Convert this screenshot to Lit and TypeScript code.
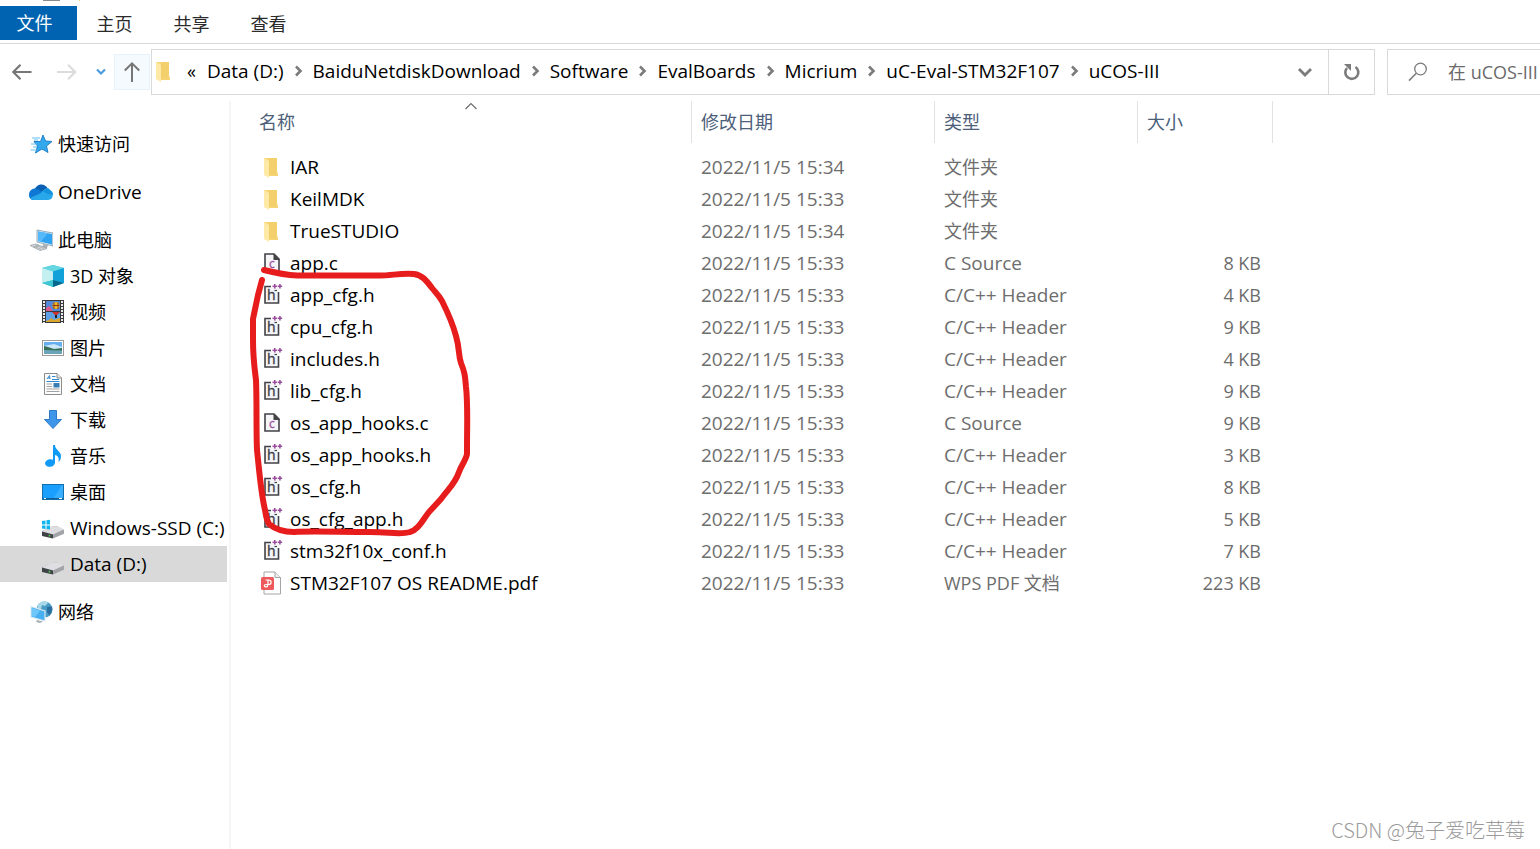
import { LitElement, html, css, svg, nothing, TemplateResult } from "lit";
import { customElement } from "lit/decorators.js";
import { classMap } from "lit/directives/class-map.js";

type FileKind = "folder" | "c" | "h" | "pdf";

interface FileRow {
  name: string;
  date: string;
  type: string;
  size: string;
  kind: FileKind;
}

interface NavItem {
  label: string;
  icon: string;
  child?: boolean;
  group?: boolean;
  selected?: boolean;
}

const HEADER = "C/C++ Header";

const FILES: FileRow[] = [
  { name: "IAR", date: "2022/11/5 15:34", type: "文件夹", size: "", kind: "folder" },
  { name: "KeilMDK", date: "2022/11/5 15:33", type: "文件夹", size: "", kind: "folder" },
  { name: "TrueSTUDIO", date: "2022/11/5 15:34", type: "文件夹", size: "", kind: "folder" },
  { name: "app.c", date: "2022/11/5 15:33", type: "C Source", size: "8 KB", kind: "c" },
  { name: "app_cfg.h", date: "2022/11/5 15:33", type: HEADER, size: "4 KB", kind: "h" },
  { name: "cpu_cfg.h", date: "2022/11/5 15:33", type: HEADER, size: "9 KB", kind: "h" },
  { name: "includes.h", date: "2022/11/5 15:33", type: HEADER, size: "4 KB", kind: "h" },
  { name: "lib_cfg.h", date: "2022/11/5 15:33", type: HEADER, size: "9 KB", kind: "h" },
  { name: "os_app_hooks.c", date: "2022/11/5 15:33", type: "C Source", size: "9 KB", kind: "c" },
  { name: "os_app_hooks.h", date: "2022/11/5 15:33", type: HEADER, size: "3 KB", kind: "h" },
  { name: "os_cfg.h", date: "2022/11/5 15:33", type: HEADER, size: "8 KB", kind: "h" },
  { name: "os_cfg_app.h", date: "2022/11/5 15:33", type: HEADER, size: "5 KB", kind: "h" },
  { name: "stm32f10x_conf.h", date: "2022/11/5 15:33", type: HEADER, size: "7 KB", kind: "h" },
  { name: "STM32F107 OS README.pdf", date: "2022/11/5 15:33", type: "WPS PDF 文档", size: "223 KB", kind: "pdf" },
];

const NAV: NavItem[] = [
  { label: "快速访问", icon: "star" },
  { label: "OneDrive", icon: "cloud", group: true },
  { label: "此电脑", icon: "pc", group: true },
  { label: "3D 对象", icon: "cube", child: true },
  { label: "视频", icon: "video", child: true },
  { label: "图片", icon: "picture", child: true },
  { label: "文档", icon: "doc", child: true },
  { label: "下载", icon: "download", child: true },
  { label: "音乐", icon: "music", child: true },
  { label: "桌面", icon: "desktop", child: true },
  { label: "Windows-SSD (C:)", icon: "diskc", child: true },
  { label: "Data (D:)", icon: "disk", child: true, selected: true },
  { label: "网络", icon: "network", group: true },
];

const CRUMBS = ["Data (D:)", "BaiduNetdiskDownload", "Software", "EvalBoards", "Micrium", "uC-Eval-STM32F107", "uCOS-III"];

const isLatin = (text: string) => /^[\x20-\x7e]+$/.test(text);

const folder = svg`
  <path d="M4 3H17V19H4Z" fill="#f7d778"/>
  <path d="M9 3H17V19H9Z" fill="#f3d06c"/>
  <path d="M16 14L18 19V21H9V19H16Z" fill="#f5d272"/>
  <path d="M4 3L9 6V23L4 20Z" fill="#ffe9a6"/>`;

const disk = svg`
  <path d="M1 15L12 10H16L23 14V18L12 22L1 19Z" fill="#c3c3c7"/>
  <path d="M1 15.500L11 10.500H17L23 13.500L12 18.500Z" fill="#dedee2"/>
  <path d="M1 15.500L12 18.500V22.500L1 20Z" fill="#3e4345"/>
  <path d="M12 18.500L23 13.500V17.500L12 22.500Z" fill="#a3a4a8"/>
  <path d="M8.500 18.800V20.500" stroke="#55d455" stroke-width="1.500"/>`;

const ICONS: Record<string, TemplateResult> = {
  folder,
  c: svg`
    <path d="M5 3H14L19 8V20H5Z" fill="#f5f4f7" stroke="#424247" stroke-width="1.600"/>
    <path d="M13.500 2.500L20 9H13.500Z" fill="#424247"/>
    <text x="11.800" y="16.500" text-anchor="middle" font-family="Open Sans, sans-serif" font-size="12" fill="#9b4f9e" stroke="#9b4f9e" stroke-width=".3">c</text>`,
  h: svg`
    <path d="M5 4H19V20H5Z" fill="#f5f4f7"/>
    <path d="M11 3.500H5V20H18.500V9" fill="none" stroke="#424247" stroke-width="1.600"/>
    <text x="11.300" y="17" text-anchor="middle" font-family="Open Sans, sans-serif" font-size="14" fill="#424247" stroke="#424247" stroke-width=".4">h</text>
    <path d="M14.500 7.500H17" fill="none" stroke="#424247" stroke-width="1.200"/>
    <path d="M12.500 3.300H17M14.750 1V5.600M17.700 3.300H22.200M19.950 1V5.600" stroke="#9b4f9e" stroke-width="1.600"/>`,
  pdf: svg`
    <path d="M4 1H15L20.500 6.500V23H4Z" fill="#fff" stroke="#a5a5a5"/>
    <path d="M15 1V6.500H20.500" fill="#eee" stroke="#a5a5a5"/>
    <rect x="1" y="6" width="13" height="13" rx="1.500" fill="#ee5a5c"/>
    <path d="M5.500 9H8.500C12 9 12 13.500 8.500 13.500H6.500M8 9.500V13.500C8 16.500 4.500 16.500 4.300 14.800C4.200 13.700 5.500 13.500 6.500 13.500" fill="none" stroke="#fff" stroke-width="1.200"/>`,
  star: svg`
    <path d="M14 3L16.500 9L23 9.500L17.500 14L19 20.500L13 17L6.500 21L8.500 14L5 9.500H11.500Z" fill="#34a8ec" stroke="#1579c4" stroke-width=".9"/>
    <path d="M3 6H11M5 8H9M2 12H8M4 15H8M1.500 18H8" stroke="#62bff2" stroke-width="1"/>`,
  cloud: svg`
    <path d="M5 12C6 3 16 2 19 9L13 15Z" fill="#0b60b4"/>
    <path d="M0 15C0 9 6 7 10 10L17 14L10 20H5C2 20 0 18 0 15Z" fill="#0f78d4"/>
    <path d="M12 13C15 8 20 7 21 10C25 12 25 20 19 20H5C3 20 1.500 19 1 18Z" fill="#28a8ea"/>
    <path d="M14 11.500C17 8 20 9 20.500 10C23 10.500 24 13 24 15L19 14Z" fill="#1490df"/>`,
  pc: svg`
    <path d="M8 2L24 5V18L8 14Z" fill="#dbe9f2" stroke="#7e98a7" stroke-width=".8"/>
    <path d="M9 3.500L23 6V16.500L9 13Z" fill="#2fa2f2"/>
    <path d="M9 3.500L19 5.300L12 13.700L9 13Z" fill="#55b9fa"/>
    <path d="M14 16L19 17L18 20H13Z" fill="#a9b1b5"/>
    <path d="M1 17.500L7 16L18 20.500L11 22.500Z" fill="#d9dde0" stroke="#9ba3a8" stroke-width=".8"/>
    <path d="M4 18L12 21.200M6 17L15 20.500M5 19.500L10 17.500" stroke="#8e979c" stroke-width=".6"/>`,
  cube: svg`
    <path d="M1 4L12 1L23 4V19L12 23L1 19Z" fill="#3bcbdb"/>
    <path d="M1 4L12 1L23 4L12 7.500Z" fill="#66d6e1"/>
    <path d="M1 4L12 7.500V16L1 19Z" fill="#c5f0f2"/>
    <path d="M12 7.500L23 4V19L12 16Z" fill="#12a2d9"/>
    <path d="M1 19L12 16V23Z" fill="#3ec7d1"/>
    <path d="M12 16L23 19L12 23Z" fill="#07668e"/>`,
  video: svg`
    <rect x="1" y="0" width="22" height="23" fill="#3a3a3c"/>
    <rect x="5" y="1" width="14" height="10" fill="#5287dc"/>
    <rect x="5" y="12" width="14" height="10" fill="#5da0e6"/>
    <path d="M5 8L8 6L12 11H5Z" fill="#dc5a8c"/>
    <circle cx="15" cy="5.500" r="3.500" fill="#edbb24"/>
    <path d="M13 2.500V9M17 2.500V9M11.500 5.500H18.500" stroke="#8b351c"/>
    <path d="M11 12H19L15 16Z" fill="#c9332b"/>
    <path d="M14 15H16V18H14Z" fill="#20221f"/>
    <path d="M5 21L8 20L10 18L13 20L16 19L19 18V22H5Z" fill="#dba52e"/>
    <path d="M3 1V23M21 1V23" stroke="#eee" stroke-width="2" stroke-dasharray="2 1"/>`,
  picture: svg`
    <rect x="1.500" y="4.500" width="21" height="15" fill="#fff" stroke="#9b9b9b"/>
    <rect x="3" y="6" width="18" height="12" fill="#65aff0"/>
    <path d="M3 10L13 8L21 11V14H3Z" fill="#cbe6f8"/>
    <path d="M3 10L7 11L13 13L21 12V15H3Z" fill="#356f58"/>
    <path d="M3 14L21 14.500V18H3Z" fill="#6ba4b9"/>`,
  doc: svg`
    <path d="M3.500 1.500H16L20.500 6V22.500H3.500Z" fill="#fdfdfd" stroke="#8c8c8c"/>
    <path d="M16 1.500V6H20.500" fill="#e2e2e2" stroke="#8c8c8c"/>
    <path d="M6 7L8.500 3.500L9 7M7 6H9M11 4.500H14.500M11 7.500H18M5.500 9.500H18.500" stroke="#2f88d2" fill="none"/>
    <path d="M5.500 12H11M5.500 14.500H11M5.500 17H18.500M5.500 19.500H18.500" stroke="#a2a2a2"/>
    <path d="M12.500 11H18.500V15.500H12.500Z" fill="#367db6"/>`,
  download: svg`<path d="M8.500 2.500H15.500V11.500H20.500L12 20.500L3.500 11.500H8.500Z" fill="#3f96e8" stroke="#2d7bc8"/>`,
  music: svg`
    <path d="M12 1H14C14 6 20 7 20 12C20 15 19 17 17.500 18C18.500 13 16 11.500 14 11V19H12Z" fill="#119af5"/>
    <ellipse cx="9" cy="19" rx="5" ry="3.800" transform="rotate(-12 9 19)" fill="#119af5"/>`,
  desktop: svg`
    <rect x="1.500" y="4.500" width="21" height="15" fill="#1a9fff" stroke="#116fad"/>
    <path d="M12 19L21 5H22V19Z" fill="#38aeff"/>
    <path d="M2 18.500H22" stroke="#0c5d96"/>
    <path d="M3 18.500H5M18 18.500H21" stroke="#fff"/>`,
  diskc: svg`${disk}
    <path d="M1 5L4.500 4.500V8.500H1ZM5.500 4.300L9 3.800V8.500H5.500ZM1 9.500H4.500V13L1 12.500ZM5.500 9.500H9V13.500L5.500 13Z" fill="#10b5ee"/>`,
  disk,
  network: svg`
    <circle cx="15.500" cy="9.500" r="8" fill="#4b9bc7"/>
    <path d="M9 5C12 0 18 1 19 3L16 6L13 5L12 9L8 10Z" fill="#a9d8e9"/>
    <path d="M18 7L23 6.500C24 10 22 14 20 15L18 12Z" fill="#2b6f9f"/>
    <path d="M2 6.500L16 11V21L2 17Z" fill="#46b0f1" stroke="#dbe9f2" stroke-width="1.200"/>
    <path d="M3 8L11 10.500L6 17L3 16Z" fill="#6fc6f8"/>
    <path d="M8 20L14 21.500L11 23L7 22Z" fill="#a9b1b5"/>`,
};

const icon = (name: string) =>
  html`<svg class="icon" viewBox="0 0 24 24" width="24" height="24" aria-hidden="true">${ICONS[name]}</svg>`;

@customElement("app-root")
export class AppRoot extends LitElement {
  static styles = css`
    :host {
      display: flex;
      flex-direction: column;
      position: relative;
      min-height: 100vh;
      overflow: hidden;
      background: #fff;
      color: #000;
      font-family: "Open Sans", "Noto Sans CJK SC", sans-serif;
      font-size: 18px;
      line-height: 24px;
    }
    * { box-sizing: border-box; }
    button, input {
      margin: 0;
      padding: 0;
      border: 0;
      background: none;
      color: inherit;
      font: inherit;
    }
    svg { display: block; flex: none; }
    .strip { height: 6px; padding-left: 43px; }
    .tabs {
      display: flex;
      height: 38px;
      border-bottom: 1px solid #d9dadb;
    }
    .tab { width: 77px; height: 34px; padding: 1px 2px 0 0; color: #2b2b2b; }
    .tab.file { background: #0063b1; color: #fff; padding: 0 8px 0 0; }
    .bar { display: flex; height: 57px; padding: 5px 0 6px; }
    .history { display: flex; align-items: center; width: 151px; flex: none; }
    .history button { display: flex; align-items: center; justify-content: center; height: 36px; }
    .step { width: 44px; }
    .recent { width: 25px; }
    .up { width: 36px; margin-left: 1px; background: #f5faff; border: 1px solid #e6f2fc; }
    .address { display: flex; flex: 1; min-width: 0; border: 1px solid #d9d9d9; }
    .crumbs { display: flex; flex: 1; min-width: 0; align-items: center; overflow: hidden; white-space: nowrap; padding-bottom: 2px; }
    .more { width: 31px; text-align: center; }
    .crumbs .latin { font-size: 19px; }
    .sep { width: 29px; display: flex; justify-content: center; flex: none; }
    .drop, .refresh { display: flex; align-items: center; justify-content: center; flex: none; width: 46px; }
    .refresh { border-left: 1px solid #d9d9d9; }
    .search {
      display: flex;
      flex: none;
      align-items: center;
      gap: 19px;
      width: 153px;
      margin-left: 12px;
      padding-left: 19px;
      border: 1px solid #d9d9d9;
      border-right: 0;
    }
    .search input { flex: 1; min-width: 0; height: 30px; outline: 0; }
    .search input::placeholder { color: #6a6a6a; opacity: 1; }
    .body { display: flex; flex: 1; }
    .side { width: 231px; flex: none; padding: 25px 2px 0 0; border-right: 2px solid #f6f6f6; }
    .side ul { list-style: none; margin: 0; padding: 0; }
    .side li.group { margin-top: 12px; }
    .side a {
      display: flex;
      align-items: center;
      gap: 5px;
      height: 36px;
      padding-left: 29px;
      color: #000;
      text-decoration: none;
      white-space: nowrap;
    }
    .side a.child { padding-left: 41px; }
    .side a.selected { background: #d9d9d9; }
    .list { position: relative; flex: 1; min-width: 0; padding-left: 19px; }
    table { border-collapse: separate; border-spacing: 0; table-layout: fixed; width: 1023px; }
    .c-name { width: 442px; }
    .c-date { width: 243px; }
    .c-type { width: 203px; }
    .c-size { width: 135px; }
    th {
      position: relative;
      height: 42px;
      padding: 0 9px;
      border-right: 1px solid #e2e2e2;
      color: #4c607a;
      font-weight: 400;
      text-align: left;
    }
    .caret { position: absolute; left: 50%; top: 1px; margin-left: -7px; }
    .gap td { height: 8px; padding: 0; }
    td { height: 32px; padding: 0 9px; color: #6d6d6d; white-space: nowrap; }
    td.name { padding-left: 10px; color: #000; }
    .latin { font-size: 19px; }
    td.size { text-align: right; padding-right: 12px; }
    .entry { display: flex; align-items: center; gap: 6px; }
    .ink { position: absolute; left: 19px; top: 159px; pointer-events: none; }
    .credit {
      position: absolute;
      right: 15px;
      bottom: 7px;
      color: #9b9b9b;
      font-family: "Noto Sans CJK SC", sans-serif;
      font-size: 20px;
      font-weight: 300;
    }
  `;

  private chevron() {
    return html`<svg width="9" height="12" viewBox="0 0 9 12" aria-hidden="true">
      <path d="M2 1.500L6.500 6L2 10.500" fill="none" stroke="#7b7b7b" stroke-width="2.600" />
    </svg>`;
  }

  render() {
    return html`
      <div class="strip">
        <svg width="40" height="2" viewBox="0 0 40 2" aria-hidden="true">
          <path d="M0 0H17V1H0Z" fill="#8a8a8a" /><path d="M36 0H37V1H36Z" fill="#f3d06c" />
        </svg>
      </div>
      <div class="tabs">
        <button class="tab file">文件</button>
        <button class="tab">主页</button>
        <button class="tab">共享</button>
        <button class="tab">查看</button>
      </div>
      <div class="bar">
        <div class="history">
          <button class="step" aria-label="后退">
            <svg width="22" height="18" viewBox="0 0 22 18"><path d="M20.500 9H2.500M9.500 1.800L2.300 9L9.500 16.200" fill="none" stroke="#767676" stroke-width="2.200" /></svg>
          </button>
          <button class="step" aria-label="前进">
            <svg width="22" height="18" viewBox="0 0 22 18"><path d="M2 9H20M13 1.800L20.200 9L13 16.200" fill="none" stroke="#dcdcdc" stroke-width="2.200" /></svg>
          </button>
          <button class="recent" aria-label="最近位置">
            <svg width="10" height="8" viewBox="0 0 10 8"><path d="M1 1.500L5 5.500L9 1.500" fill="none" stroke="#4a9be0" stroke-width="2.200" /></svg>
          </button>
          <button class="up" aria-label="上移">
            <svg width="18" height="22" viewBox="0 0 18 22"><path d="M9 21V2.500M1.800 9.500L9 2.300L16.200 9.500" fill="none" stroke="#767676" stroke-width="2" /></svg>
          </button>
        </div>
        <div class="address">
          <div class="crumbs">
            ${icon("folder")}
            <button class="more">«</button>
            ${CRUMBS.map(
              (c, i) => html`${i ? html`<span class="sep">${this.chevron()}</span>` : nothing}<button class="latin">${c}</button>`,
            )}
          </div>
          <button class="drop" aria-label="展开地址">
            <svg width="16" height="10" viewBox="0 0 16 10"><path d="M2 2L8 8L14 2" fill="none" stroke="#7b7b7b" stroke-width="2.800" /></svg>
          </button>
          <button class="refresh" aria-label="刷新">
            <svg width="18" height="18" viewBox="0 0 18 18"><path d="M4 5A6.500 6.500 0 1 0 12.500 4" fill="none" stroke="#7b7b7b" stroke-width="2.600" /><path d="M1 1H8V8Z" fill="#7b7b7b" /></svg>
          </button>
        </div>
        <label class="search">
          <svg width="22" height="22" viewBox="0 0 22 22" aria-hidden="true"><circle cx="13.500" cy="8" r="5.800" fill="none" stroke="#7b7b7b" stroke-width="1.300" /><path d="M9.300 12.300L2 19.600" stroke="#7b7b7b" stroke-width="1.500" /></svg>
          <input type="text" aria-label="搜索" placeholder="在 uCOS-III" />
        </label>
      </div>
      <div class="body">
        <nav class="side">
          <ul>
            ${NAV.map(
              (n) => html`<li class=${classMap({ group: !!n.group })}>
                <a href="#" class=${classMap({ child: !!n.child, selected: !!n.selected, latin: isLatin(n.label) })}>${icon(n.icon)}<span>${n.label}</span></a>
              </li>`,
            )}
          </ul>
        </nav>
        <main class="list">
          <table>
            <colgroup><col class="c-name" /><col class="c-date" /><col class="c-type" /><col class="c-size" /></colgroup>
            <thead>
              <tr>
                <th>名称<svg class="caret" width="14" height="8" viewBox="0 0 14 8" aria-hidden="true"><path d="M1.500 7L7 1.500L12.500 7" fill="none" stroke="#6d6d6d" stroke-width="1.200" /></svg></th>
                <th>修改日期</th>
                <th>类型</th>
                <th>大小</th>
              </tr>
            </thead>
            <tbody>
              <tr class="gap" aria-hidden="true"><td colspan="4"></td></tr>
              ${FILES.map(
                (f) => html`<tr>
                  <td class="name latin"><span class="entry">${icon(f.kind)}<span>${f.name}</span></span></td>
                  <td class="latin">${f.date}</td>
                  <td class=${classMap({ latin: isLatin(f.type) })}>${f.type}</td>
                  <td class="size">${f.size}</td>
                </tr>`,
              )}
            </tbody>
          </table>
          <svg class="ink" width="230" height="290" viewBox="250 260 230 290" aria-hidden="true">
            <path d="M264 270C276 273 284 275 297 275.500H380C392 275.500 400 273 414 274C422 275 426 280 432 288C436 293 438 294 442 301C447 311 452 321 456 336C460 350 458 354 461 363C465 373 465 376 466 387C468 404 467 420 467 454C466 460 461 466 459 472C455 484 449 488 441 499L429 512C422 521 418 530 410 532C400 535 390 532 370 532C340 532 310 531 294 532C284 532 276 530 269 524C266 519 266 515 265 510C261 493 260 478 257 450C256 425 257 405 256 380C254 364 253 358 253 340V319C255 309 256 305 258 295L262 280" fill="none" stroke="#e71d1d" stroke-width="6" stroke-linecap="round" stroke-linejoin="round" />
          </svg>
        </main>
      </div>
      <div class="credit">CSDN @兔子爱吃草莓</div>
    `;
  }
}
